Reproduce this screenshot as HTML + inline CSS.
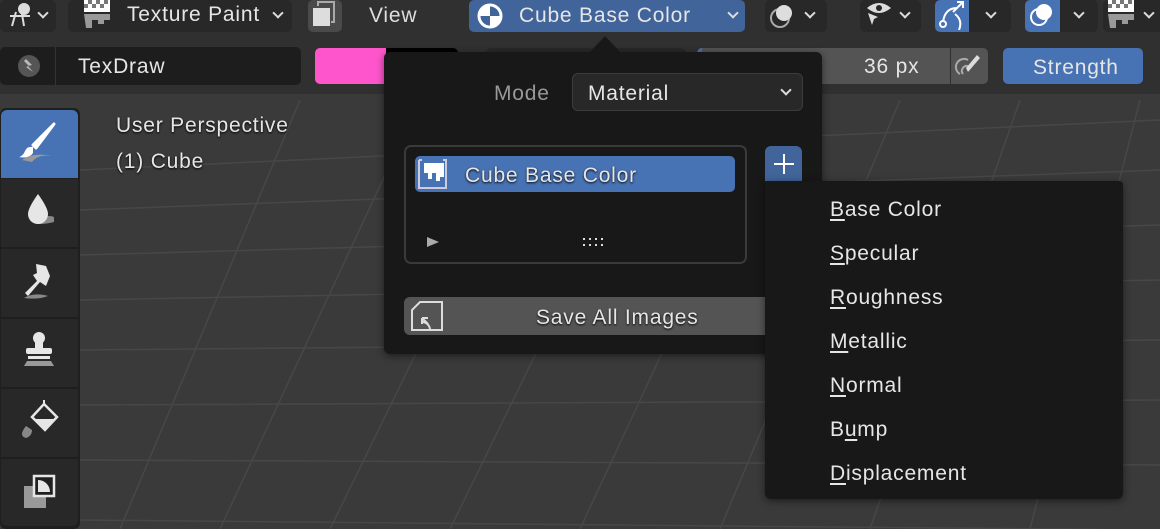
<!DOCTYPE html>
<html><head><meta charset="utf-8"><style>
*{box-sizing:border-box;margin:0;padding:0}
body{width:1160px;height:529px;overflow:hidden;background:#3a3a3a;font-family:"Liberation Sans","DejaVu Sans",sans-serif;color:#e6e6e6;position:relative}
.a{position:absolute}
.btn{position:absolute;background:#282828;border-radius:5px}
.blue{background:#4772b3}
.t{position:absolute;font-size:21px;letter-spacing:0.8px;white-space:nowrap;line-height:1}
.chev{position:absolute;width:8px;height:8px;border-right:2px solid #ddd;border-bottom:2px solid #ddd;transform:rotate(45deg)}
.item{position:absolute;left:830px;font-size:21px;letter-spacing:0.8px;color:#e6e6e6}
.item u{text-decoration-thickness:2px;text-underline-offset:3px}
.tool{position:absolute;left:1px;width:77px;background:#282828;height:68px}
</style></head><body>
<svg class="a" style="left:0;top:0" width="1160" height="529">
<rect x="0" y="0" width="1160" height="40" fill="#303030"/>
<rect x="0" y="40" width="1160" height="54" fill="#303030"/>
<g stroke="#474747" stroke-width="1.5" fill="none">
<path d="M80 170 L1160 120 M80 210 L1160 170 M80 255 L1160 225 M80 300 L1160 280 M80 350 L1160 340 M80 405 L1160 400 M80 460 L1160 465 M80 520 L1160 530"/>
<path d="M120 529 L300 100 M220 529 L420 100 M330 529 L540 100 M450 529 L660 100 M580 529 L780 100 M720 529 L900 100 M870 529 L1020 100 M1030 529 L1140 100"/>
</g>
</svg>
<!-- top header -->
<div class="btn" style="left:0;top:0;width:56px;height:32px"></div>
<svg class="a" style="left:8px;top:2px" width="26" height="26"><g stroke="#ddd" stroke-width="2" fill="none"><path d="M2 14h20M4 24l4-14M16 24l-2-12"/></g><circle cx="16" cy="7" r="6" fill="#ddd"/></svg>
<div class="chev" style="left:39px;top:9px"></div>
<div class="btn" style="left:68px;top:0;width:224px;height:32px"></div>
<svg class="a" style="left:84px;top:0" width="26" height="28"><rect x="0" y="0" width="26" height="12" fill="#fff"/><g fill="#777"><rect x="4" y="0" width="4" height="4"/><rect x="12" y="0" width="4" height="4"/><rect x="20" y="0" width="4" height="4"/><rect x="0" y="4" width="4" height="4"/><rect x="8" y="4" width="4" height="4"/><rect x="16" y="4" width="4" height="4"/></g><path d="M0 14h26v6h-6v4h-6v-4h-6v8h-6z" fill="#999"/></svg>
<div class="t" style="left:127px;top:4px">Texture Paint</div>
<div class="chev" style="left:274px;top:9px"></div>
<div class="btn" style="left:308px;top:0;width:34px;height:32px;background:#4a4a4a"></div>
<svg class="a" style="left:310px;top:0" width="30" height="30"><rect x="3" y="8" width="17" height="18" fill="#ddd"/><path d="M8 6V2h16v20h-3" stroke="#aaa" stroke-width="2" fill="none"/></svg>
<div class="t" style="left:369px;top:5px;color:#ddd">View</div>
<div class="btn blue" style="left:469px;top:0;width:276px;height:32px;background:#41649a"></div>
<svg class="a" style="left:476px;top:2px" width="28" height="28"><circle cx="14" cy="14" r="11" fill="none" stroke="#fff" stroke-width="3"/><path d="M14 3A11 11 0 0 0 3 14h11z M14 14h11A11 11 0 0 1 14 25z" fill="#fff"/></svg>
<div class="t" style="left:519px;top:5px">Cube Base Color</div>
<div class="chev" style="left:729px;top:9px"></div>
<div class="btn" style="left:765px;top:0;width:62px;height:32px"></div>
<svg class="a" style="left:768px;top:2px" width="28" height="28"><circle cx="12" cy="16" r="9" fill="none" stroke="#aaa" stroke-width="2"/><circle cx="16" cy="11" r="8" fill="#ddd"/></svg>
<div class="chev" style="left:806px;top:9px"></div>
<div class="btn" style="left:860px;top:0;width:61px;height:32px"></div>
<svg class="a" style="left:864px;top:0" width="30" height="30"><path d="M3 8q12-10 24 0q-12 10-24 0z" fill="#ddd"/><circle cx="15" cy="8" r="3" fill="#282828"/><path d="M4 13l10 4-4 2-2 6z" fill="#ddd"/></svg>
<div class="chev" style="left:901px;top:9px"></div>
<div class="btn" style="left:935px;top:0;width:76px;height:32px"></div>
<div class="a blue" style="left:935px;top:0;width:34px;height:32px;border-radius:5px 0 0 5px"></div>
<svg class="a" style="left:937px;top:0" width="30" height="30"><path d="M6 22q2-14 14-14" stroke="#fff" stroke-width="2" fill="none"/><circle cx="6" cy="24" r="3" fill="none" stroke="#fff" stroke-width="2"/><path d="M16 12l10-10M20 2h6v6" stroke="#fff" stroke-width="2" fill="none"/><path d="M18 14q8 6 4 16" stroke="#fff" stroke-width="2" fill="none"/></svg>
<div class="chev" style="left:987px;top:9px"></div>
<div class="btn" style="left:1025px;top:0;width:73px;height:32px"></div>
<div class="a blue" style="left:1025px;top:0;width:35px;height:32px;border-radius:5px 0 0 5px"></div>
<svg class="a" style="left:1028px;top:2px" width="28" height="28"><circle cx="11" cy="15" r="8" fill="none" stroke="#fff" stroke-width="2"/><circle cx="16" cy="10" r="8" fill="#fff"/></svg>
<div class="chev" style="left:1075px;top:9px"></div>
<div class="btn" style="left:1103px;top:0;width:60px;height:32px"></div>
<svg class="a" style="left:1108px;top:0" width="26" height="28"><rect width="26" height="12" fill="#fff"/><g fill="#777"><rect x="4" width="4" height="4"/><rect x="12" width="4" height="4"/><rect x="20" width="4" height="4"/><rect y="4" width="4" height="4"/><rect x="8" y="4" width="4" height="4"/><rect x="16" y="4" width="4" height="4"/></g><path d="M0 14h26v6h-6v4h-6v-4h-6v8h-6z" fill="#999"/></svg>
<div class="chev" style="left:1145px;top:9px"></div>
<!-- row 2 -->
<div class="btn" style="left:0;top:47px;width:301px;height:38px;background:#1d1d1d"></div>
<div class="a" style="left:55px;top:47px;width:1px;height:38px;background:#333"></div>
<svg class="a" style="left:16px;top:53px" width="26" height="26"><circle cx="13" cy="13" r="11" fill="#555"/><path d="M10 6l6 6-4 1 5 6-7-5 3-1-5-5z" fill="#bbb"/></svg>
<div class="t" style="left:78px;top:56px">TexDraw</div>
<div class="a" style="left:315px;top:48px;width:71px;height:36px;background:#ff55cc;border-radius:5px 0 0 5px"></div>
<div class="a" style="left:386px;top:48px;width:72px;height:36px;background:#000;border-radius:0 5px 5px 0"></div>
<div class="btn" style="left:486px;top:48px;width:200px;height:36px;background:#282828"></div>
<div class="a" style="left:697px;top:48px;width:253px;height:36px;background:#545454;border-radius:5px 0 0 5px"></div>
<div class="a" style="left:697px;top:48px;width:5px;height:36px;background:#4772b3;border-radius:5px 0 0 5px"></div>
<div class="t" style="left:864px;top:56px">36 px</div>
<div class="a" style="left:951px;top:48px;width:37px;height:36px;background:#545454;border-radius:0 5px 5px 0"></div>
<svg class="a" style="left:954px;top:52px" width="30" height="28"><path d="M6 22a8 8 0 0 1 8-14M9 22a5 5 0 0 1 5-8" stroke="#aaa" stroke-width="2" fill="none"/><path d="M14 20l12-14-3-3-11 13z" fill="#ddd"/></svg>
<div class="btn blue" style="left:1003px;top:48px;width:140px;height:36px"></div>
<div class="t" style="left:1033px;top:57px">Strength</div>
<!-- toolbar -->
<div class="a" style="left:0;top:108px;width:80px;height:421px;background:#1f1f1f;border-radius:6px"></div>
<div class="tool" style="top:110px;background:#4772b3;border-radius:6px 6px 0 0"></div>
<div class="tool" style="top:179px"></div>
<div class="tool" style="top:249px"></div>
<div class="tool" style="top:319px"></div>
<div class="tool" style="top:389px"></div>
<div class="tool" style="top:459px;height:67px;border-radius:0 0 6px 6px"></div>
<svg class="a" style="left:14px;top:120px" width="44" height="46"><path d="M40 4L22 28l-3-3z" fill="#fff" stroke="#fff" stroke-width="3" stroke-linejoin="round"/><path d="M19 27q-6-1-8 4t-6 6q10 2 14-4z" fill="#fff"/><path d="M8 40q10-8 30-4q-14-2-20 6z" fill="#999"/></svg>
<svg class="a" style="left:22px;top:192px" width="32" height="36"><path d="M10 20q-6 6 0 10t22 0q4-6-6-6z" fill="#888"/><path d="M16 2q-10 14-10 20a10 10 0 0 0 20 0q0-6-10-20z" fill="#e6e6e6"/></svg>
<svg class="a" style="left:22px;top:260px" width="32" height="42"><path d="M2 38q10-6 24-2q-10 4-24 2z" fill="#888"/><path d="M14 4l10 2 4 10-4 10-6-4-12 14-3-3 12-12-4-6 4-2z" fill="#e6e6e6"/></svg>
<svg class="a" style="left:20px;top:330px" width="38" height="40"><circle cx="19" cy="8" r="6" fill="#e6e6e6"/><rect x="15" y="12" width="8" height="8" fill="#e6e6e6"/><rect x="6" y="18" width="26" height="6" rx="2" fill="#e6e6e6"/><rect x="8" y="26" width="22" height="3" fill="#e6e6e6"/><path d="M4 36l3-5h24l3 5z" fill="#999"/></svg>
<svg class="a" style="left:18px;top:398px" width="42" height="44"><path d="M26 6l13 13-12 13-13-13z" fill="none" stroke="#e6e6e6" stroke-width="2.5"/><path d="M16 21h22l-11 11z" fill="#e6e6e6"/><path d="M26 6V2" stroke="#e6e6e6" stroke-width="2"/><path d="M8 28q-8 10 0 12q6-2 6-8z" fill="#888"/></svg>
<svg class="a" style="left:22px;top:472px" width="36" height="40"><rect x="2" y="14" width="22" height="22" fill="#999"/><rect x="12" y="4" width="20" height="20" fill="#1f1f1f" stroke="#e6e6e6" stroke-width="2.5"/><path d="M16 8a12 12 0 0 1 12 12h-12z" fill="#e6e6e6"/></svg>
<div class="t" style="left:116px;top:115px;text-shadow:0 1px 2px #000">User Perspective</div>
<div class="t" style="left:116px;top:151px;text-shadow:0 1px 2px #000">(1) Cube</div>
<!-- popover -->
<div class="a" style="left:384px;top:52px;width:438px;height:302px;background:#181818;border-radius:6px;box-shadow:0 2px 8px rgba(0,0,0,.5)"></div>
<svg class="a" style="left:588px;top:34px" width="34" height="20"><path d="M0 20L17 2L34 20z" fill="#181818"/></svg>
<div class="t" style="left:494px;top:83px;color:#999">Mode</div>
<div class="a" style="left:572px;top:73px;width:231px;height:38px;background:#282828;border:1px solid #3c3c3c;border-radius:6px"></div>
<div class="t" style="left:588px;top:83px">Material</div>
<div class="chev" style="left:782px;top:86px"></div>
<div class="a" style="left:404px;top:145px;width:343px;height:119px;border:2px solid #3a3a3a;border-radius:7px"></div>
<div class="a" style="left:415px;top:156px;width:320px;height:36px;background:#4772b3;border-radius:5px"></div>
<svg class="a" style="left:418px;top:159px" width="30" height="30"><path d="M1 1h3M1 1v28h27V1h-3" stroke="#ccd" stroke-width="2" fill="none"/><path d="M6 4h20v14h-4v4h-4v-8h-4v6h-4v-6h-4z" fill="#fff"/></svg>
<div class="t" style="left:465px;top:165px;text-shadow:0 1px 2px #000">Cube Base Color</div>
<svg class="a" style="left:426px;top:236px" width="14" height="12"><path d="M1 1l12 5-12 5z" fill="#aaa"/></svg>
<svg class="a" style="left:582px;top:236px" width="26" height="14"><g fill="#ddd"><rect x="1" y="2" width="2" height="2"/><rect x="7" y="2" width="2" height="2"/><rect x="13" y="2" width="2" height="2"/><rect x="19" y="2" width="2" height="2"/><rect x="1" y="8" width="2" height="2"/><rect x="7" y="8" width="2" height="2"/><rect x="13" y="8" width="2" height="2"/><rect x="19" y="8" width="2" height="2"/></g></svg>
<div class="a" style="left:404px;top:297px;width:370px;height:38px;background:#545454;border-radius:6px"></div>
<svg class="a" style="left:410px;top:300px" width="34" height="32"><path d="M2 30V10l8-8h22v28z" fill="none" stroke="#ddd" stroke-width="2"/><path d="M18 24l-6-6M12 18v6M12 18h6M20 30a8 8 0 0 0-8-8" stroke="#ddd" stroke-width="2" fill="none"/></svg>
<div class="t" style="left:536px;top:307px;text-shadow:0 1px 2px #000">Save All Images</div>
<div class="a" style="left:765px;top:146px;width:37px;height:36px;background:#41649a;border-radius:6px 6px 0 0"></div>
<svg class="a" style="left:772px;top:152px" width="24" height="24"><path d="M12 2v20M2 12h20" stroke="#fff" stroke-width="2"/></svg>
<!-- dropdown menu -->
<div class="a" style="left:765px;top:181px;width:358px;height:318px;background:#181818;border-radius:0 4px 6px 6px;box-shadow:0 2px 8px rgba(0,0,0,.5)"></div>
<div class="item" style="top:198px"><u>B</u>ase Color</div>
<div class="item" style="top:242px"><u>S</u>pecular</div>
<div class="item" style="top:286px"><u>R</u>oughness</div>
<div class="item" style="top:330px"><u>M</u>etallic</div>
<div class="item" style="top:374px"><u>N</u>ormal</div>
<div class="item" style="top:418px">B<u>u</u>mp</div>
<div class="item" style="top:462px"><u>D</u>isplacement</div>
</body></html>
